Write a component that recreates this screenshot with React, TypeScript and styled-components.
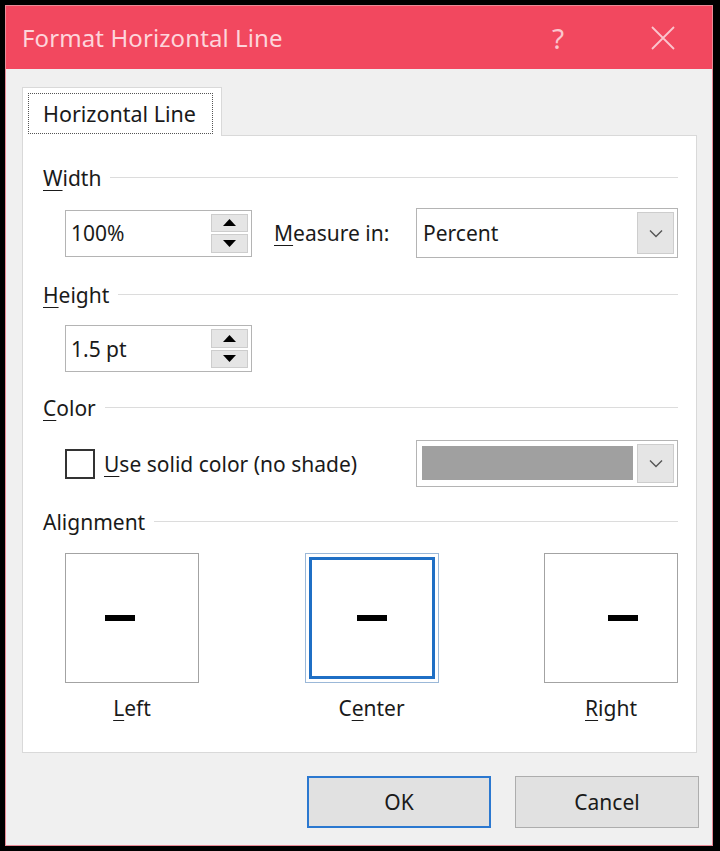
import React from "react";
import styled, { createGlobalStyle } from "styled-components";

const Global = createGlobalStyle`
  html, body { margin: 0; padding: 0; background: #000; }
  body { font-family: "Noto Sans", "Open Sans", sans-serif; }
  * { box-sizing: border-box; }
`;

const Screen = styled.div`
  width: 720px;
  height: 851px;
  background: #000;
  padding: 5px 7px 5px 5px;
`;

const Window = styled.div`
  width: 708px;
  height: 841px;
  border: 1px solid #e98a97;
  display: flex;
  flex-direction: column;
  background: #f0f0f0;
`;

const TitleBar = styled.div`
  height: 63px;
  background: #f2485f;
  display: flex;
  align-items: center;
  padding-left: 16px;
  padding-right: 29px;
  flex-shrink: 0;
`;

const Title = styled.div`
  font-size: 24px;
  color: #fdd5db;
  flex: 1;
  letter-spacing: 0.1px;
`;

const CaptionButton = styled.div<{ $gap?: number }>`
  width: 40px;
  height: 40px;
  display: flex;
  align-items: center;
  justify-content: center;
  color: #fbc5cd;
  font-size: 28px;
  font-weight: 400;
  margin-left: ${(p) => p.$gap ?? 0}px;
`;

const Body = styled.div`
  flex: 1;
  display: flex;
  flex-direction: column;
  padding: 18px 14px 0 16px;
`;

const TabStrip = styled.div`
  display: flex;
  height: 48px;
`;

const Tab = styled.div`
  width: 200px;
  height: 49px;
  background: #fff;
  border: 1px solid #d9d9d9;
  border-bottom: none;
  padding: 5px 8px 2px 5px;
  position: relative;
  z-index: 1;
`;

const FocusRect = styled.div`
  height: 100%;
  border: 1px dotted #555;
  display: flex;
  align-items: center;
  padding-left: 14px;
  font-size: 21.5px;
  color: #1a1a1a;
`;

const Panel = styled.div`
  width: 675px;
  height: 618px;
  background: #fff;
  border: 1px solid #d9d9d9;
  padding: 27px 18px 0 20px;
  display: flex;
  flex-direction: column;
`;

const SectionHeader = styled.div<{ $mt?: number }>`
  display: flex;
  align-items: center;
  height: 30px;
  margin-top: ${(p) => p.$mt ?? 0}px;
  font-size: 21px;
  color: #1a1a1a;
`;

const HeaderRule = styled.div`
  flex: 1;
  height: 1px;
  background: #dcdcdc;
  margin-left: 9px;
  margin-top: -2px;
`;

const U = styled.span`
  text-decoration: underline;
  text-underline-offset: 4px;
  text-decoration-thickness: 1px;
`;

const Row = styled.div<{ $mt: number; $h: number }>`
  display: flex;
  align-items: center;
  margin-top: ${(p) => p.$mt}px;
  height: ${(p) => p.$h}px;
  padding-left: 22px;
`;

const Spinner = styled.div`
  width: 187px;
  height: 47px;
  border: 1px solid #b4b4b4;
  background: #fff;
  display: flex;
  align-items: center;
  padding: 3px 3px 3px 5px;
  font-size: 21px;
  color: #1a1a1a;
`;

const SpinValue = styled.div`
  flex: 1;
`;

const SpinButtons = styled.div`
  width: 37px;
  height: 100%;
  display: flex;
  flex-direction: column;
  gap: 2px;
`;

const SpinButton = styled.div`
  flex: 1;
  background: #e5e5e5;
  border: 1px solid #cdcdcd;
  display: flex;
  align-items: center;
  justify-content: center;
`;

const FieldLabel = styled.div`
  font-size: 21px;
  color: #1a1a1a;
  margin-left: 22px;
`;

const Select = styled.div<{ $h: number }>`
  width: 262px;
  height: ${(p) => p.$h}px;
  margin-left: auto;
  border: 1px solid #b4b4b4;
  background: #fff;
  display: flex;
  align-items: stretch;
  padding: 3px 3px 3px 0;
  font-size: 21px;
  color: #1a1a1a;
`;

const SelectText = styled.div`
  flex: 1;
  display: flex;
  align-items: center;
  padding-left: 6px;
`;

const ColorSwatch = styled.div`
  flex: 1;
  background: #a0a0a0;
  margin: 2px 4px 3px 5px;
`;

const DropButton = styled.div`
  width: 37px;
  background: #e5e5e5;
  border: 1px solid #cdcdcd;
  display: flex;
  align-items: center;
  justify-content: center;
`;

const Checkbox = styled.div`
  width: 30px;
  height: 30px;
  border: 2px solid #333;
  background: #fff;
`;

const CheckLabel = styled.div`
  font-size: 21px;
  color: #1a1a1a;
  margin-left: 9px;
`;

const AlignRow = styled.div`
  display: flex;
  justify-content: space-between;
  margin-top: 16px;
  padding-left: 22px;
`;

const AlignOption = styled.div`
  width: 134px;
  display: flex;
  flex-direction: column;
  align-items: center;
`;

const AlignBox = styled.div<{ $selected?: boolean }>`
  width: 134px;
  height: 130px;
  border: 1px solid ${(p) => (p.$selected ? "#9bb8d8" : "#a3a3a3")};
  background: #fff;
  padding: ${(p) => (p.$selected ? "3px" : "0")};
`;

const AlignInner = styled.div<{ $justify: string; $pad: number; $selected?: boolean }>`
  width: 100%;
  height: 100%;
  display: flex;
  align-items: center;
  justify-content: ${(p) => p.$justify};
  padding: 0 ${(p) => p.$pad}px;
  border: ${(p) => (p.$selected ? "3px solid #1f6fc5" : "none")};
`;

const Dash = styled.div`
  width: 30px;
  height: 6px;
  background: #000;
`;

const AlignLabel = styled.div`
  margin-top: 10px;
  height: 30px;
  font-size: 21px;
  color: #1a1a1a;
  display: flex;
  align-items: center;
`;

const Footer = styled.div`
  display: flex;
  justify-content: flex-end;
  gap: 24px;
  margin-top: 23px;
  margin-right: -1px;
`;

const Button = styled.div<{ $default?: boolean }>`
  width: 184px;
  height: 52px;
  background: #e1e1e1;
  border: ${(p) => (p.$default ? "2px solid #2b78d0" : "1px solid #adadad")};
  display: flex;
  align-items: center;
  justify-content: center;
  font-size: 21px;
  color: #1a1a1a;
`;

const Chevron = () => (
  <svg width="14" height="9" viewBox="0 0 14 9">
    <path d="M1 1.5 L7 7.5 L13 1.5" fill="none" stroke="#555" strokeWidth="1.4" />
  </svg>
);

const Tri = ({ up }: { up?: boolean }) => (
  <svg width="13" height="7" viewBox="0 0 13 7">
    <path d={up ? "M0 7 L6.5 0 L13 7 Z" : "M0 0 L6.5 7 L13 0 Z"} fill="#000" />
  </svg>
);

const SpinField = ({ value }: { value: string }) => (
  <Spinner>
    <SpinValue>{value}</SpinValue>
    <SpinButtons>
      <SpinButton>
        <Tri up />
      </SpinButton>
      <SpinButton>
        <Tri />
      </SpinButton>
    </SpinButtons>
  </Spinner>
);

export default function App() {
  return (
    <>
      <Global />
      <Screen>
        <Window>
          <TitleBar>
            <Title>Format Horizontal Line</Title>
            <CaptionButton>?</CaptionButton>
            <CaptionButton $gap={65}>
              <svg width="24" height="24" viewBox="0 0 24 24">
                <path d="M1 1 L23 23 M23 1 L1 23" stroke="#fbc5cd" strokeWidth="1.8" fill="none" />
              </svg>
            </CaptionButton>
          </TitleBar>
          <Body>
            <TabStrip>
              <Tab>
                <FocusRect>Horizontal Line</FocusRect>
              </Tab>
            </TabStrip>
            <Panel>
              <SectionHeader>
                <span>
                  <U>W</U>idth
                </span>
                <HeaderRule />
              </SectionHeader>
              <Row $mt={15} $h={50}>
                <SpinField value="100%" />
                <FieldLabel>
                  <U>M</U>easure in:
                </FieldLabel>
                <Select $h={50}>
                  <SelectText>Percent</SelectText>
                  <DropButton>
                    <Chevron />
                  </DropButton>
                </Select>
              </Row>

              <SectionHeader $mt={22}>
                <span>
                  <U>H</U>eight
                </span>
                <HeaderRule />
              </SectionHeader>
              <Row $mt={15} $h={47}>
                <SpinField value="1.5 pt" />
              </Row>

              <SectionHeader $mt={21}>
                <span>
                  <U>C</U>olor
                </span>
                <HeaderRule />
              </SectionHeader>
              <Row $mt={17} $h={47}>
                <Checkbox />
                <CheckLabel>
                  <U>U</U>se solid color (no shade)
                </CheckLabel>
                <Select $h={47}>
                  <ColorSwatch />
                  <DropButton>
                    <Chevron />
                  </DropButton>
                </Select>
              </Row>

              <SectionHeader $mt={20}>
                <span>Alignment</span>
                <HeaderRule />
              </SectionHeader>
              <AlignRow>
                <AlignOption>
                  <AlignBox>
                    <AlignInner $justify="flex-start" $pad={39}>
                      <Dash />
                    </AlignInner>
                  </AlignBox>
                  <AlignLabel>
                    <span>
                      <U>L</U>eft
                    </span>
                  </AlignLabel>
                </AlignOption>
                <AlignOption>
                  <AlignBox $selected>
                    <AlignInner $justify="center" $pad={0} $selected>
                      <Dash />
                    </AlignInner>
                  </AlignBox>
                  <AlignLabel>
                    <span>
                      C<U>e</U>nter
                    </span>
                  </AlignLabel>
                </AlignOption>
                <AlignOption>
                  <AlignBox>
                    <AlignInner $justify="flex-end" $pad={39}>
                      <Dash />
                    </AlignInner>
                  </AlignBox>
                  <AlignLabel>
                    <span>
                      <U>R</U>ight
                    </span>
                  </AlignLabel>
                </AlignOption>
              </AlignRow>
            </Panel>
            <Footer>
              <Button $default>OK</Button>
              <Button>Cancel</Button>
            </Footer>
          </Body>
        </Window>
      </Screen>
    </>
  );
}
